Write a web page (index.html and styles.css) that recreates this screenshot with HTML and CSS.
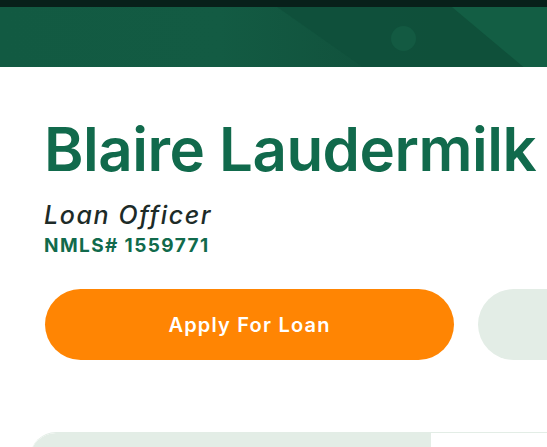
FILE: index.html
```html
<!DOCTYPE html>
<html>
<head>
<meta charset="utf-8">
<link rel="stylesheet" href="styles.css">
</head>
<body>
<header class="hero">
  <div class="topbar"></div>
  <div class="banner">
    <div class="shade"></div>
    <div class="light"></div>
    <div class="dot"></div>
  </div>
</header>
<main class="profile">
  <h1 class="name">Blaire Laudermilk</h1>
  <p class="title">Loan Officer</p>
  <p class="nmls">NMLS# 1559771</p>
  <div class="actions">
    <a class="btn btn-primary">Apply For Loan</a>
    <a class="btn btn-secondary" aria-label="Contact Me"></a>
  </div>
  <section class="card">
    <div class="tab"></div>
  </section>
</main>
</body>
</html>
```
FILE: styles.css
```css
* { box-sizing: border-box; }
html, body { margin: 0; padding: 0; background: #fff; overflow: hidden; }
body { font-family: Inter, "Noto Sans", sans-serif; width: 547px; height: 447px; }

.hero { display: flex; flex-direction: column; }
.topbar { height: 7px; background: #08201a; }
.banner {
  position: relative;
  height: 60px;
  overflow: hidden;
  background: linear-gradient(90deg, #125a42 0%, #135b43 40%, #11513c 70%, #115039 100%);
}
.shade {
  position: absolute;
  left: 220px; top: -40px;
  width: 420px; height: 200px;
  background: #10503b;
  transform: skewX(55deg);
  transform-origin: top left;
  opacity: 0.9;
}
.light {
  position: absolute;
  left: 440px; top: -10px;
  width: 200px; height: 120px;
  background: #135e44;
  transform: skewX(50deg);
  transform-origin: top left;
}
.dot {
  position: absolute;
  left: 391px; top: 19px;
  width: 25px; height: 25px;
  border-radius: 50%;
  background: #135a42;
}

.profile { padding: 0 0 0 44px; }
.name {
  margin: 52px 0 0;
  font-size: 60px;
  line-height: 1;
  font-weight: 600;
  color: #116a4c;
  white-space: nowrap;
  letter-spacing: -0.5px;
}
.title {
  margin: 24px 0 0;
  font-size: 25px;
  line-height: 1;
  font-style: italic;
  font-weight: 500;
  color: #1d2b28;
  letter-spacing: 1.6px;
}
.nmls {
  margin: 8px 0 0;
  font-size: 19px;
  line-height: 1;
  font-weight: 700;
  color: #116a4c;
  letter-spacing: 1.4px;
}
.actions {
  display: flex;
  gap: 24px;
  margin-top: 34px;
  margin-left: 1px;
}
.btn {
  flex: none;
  display: flex;
  align-items: center;
  justify-content: center;
  height: 71px;
  border-radius: 36px;
  font-size: 20px;
  font-weight: 600;
  letter-spacing: 1.2px;
}
.btn-primary { width: 409px; background: #ff8503; color: #fff; }
.btn-secondary { width: 300px; background: #e3ede6; }

.card {
  margin: 72px 0 0 -14px;
  width: 600px;
  height: 60px;
  border-top: 1px solid #e3ede6;
  border-top-left-radius: 26px;
  display: flex;
  overflow: hidden;
}
.tab {
  width: 401px;
  background: #e3ede6;
  border-top-left-radius: 26px;
}
```
